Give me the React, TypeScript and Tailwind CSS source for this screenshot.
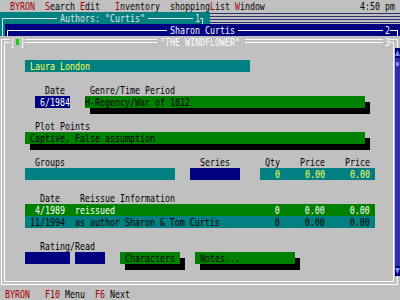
import type { ReactNode } from "react";

// text-mode cell is 5x12; glyphs stretched vertically like the DOS font
const Tx = ({ children, className = "" }: { children: ReactNode; className?: string }) => (
  <span className={`inline-block self-center leading-[8px] scale-y-120 ${className}`}>{children}</span>
);

const R = ({ children }: { children: ReactNode }) => (
  <span className="text-[#a80000]">{children}</span>
);

const Row = ({ children }: { children?: ReactNode }) => <div className="flex h-3">{children}</div>;

const MenuBar = () => (
  <div className="flex h-3 text-black">
    <Tx>
      {"  "}
      <R>BYRON</R>
      {"  "}
      <R>S</R>earch <R>E</R>dit{"   "}
      <R>I</R>nventory{"  "}shopping<R>L</R>ist <R>W</R>indow
    </Tx>
    <Tx className="ml-auto mr-[5px]">4:50 pm</Tx>
  </div>
);

const AuthorsBar = () => (
  <div className="flex h-3">
    <div className="flex w-[210px] bg-[#008080] text-[#e0e0e0]">
      <div className="ml-[2px] mt-[6px] w-[3px] border-l border-t border-[#e0e0e0]" />
      <div className="self-start mt-[6px] h-px w-[52px] bg-[#e0e0e0]" />
      <Tx className="ml-[3px]">Authors: "Curtis"</Tx>
      <div className="self-start mt-[6px] ml-[3px] h-px w-[45px] bg-[#e0e0e0]" />
      <Tx className="ml-[2px]">1</Tx>
      <div className="mt-[6px] w-[3px] border-t border-r border-[#e0e0e0]" />
    </div>
    <div className="flex-1 bg-[#c0c0c0] bg-[radial-gradient(circle,#283070_0.6px,transparent_0.9px)] bg-[length:2px_3px]" />
  </div>
);

const SharonBar = () => (
  <div className="flex h-3">
    <div className="w-[5px] bg-[#008080]">
      <div className="ml-[2px] h-full w-px bg-[#e0e0e0]" />
    </div>
    <div className="flex flex-1 bg-[#000080] text-white">
      <div className="ml-[2px] mt-[6px] w-[3px] border-l border-t border-white" />
      <div className="self-start mt-[6px] h-px w-[157px] bg-white" />
      <Tx className="ml-[3px]">Sharon Curtis</Tx>
      <div className="self-start mt-[6px] ml-[3px] h-px w-[145px] bg-white" />
      <Tx className="ml-[2px]">2</Tx>
      <div className="mt-[6px] w-[8px] border-t border-r border-white" />
    </div>
  </div>
);

const WindowTitle = () => (
  <div className="flex h-3 text-white">
    <div className="ml-px mt-[3px] flex w-[9px] border-l border-t border-white">
      <div className="ml-[2px] mt-[2px] flex-1 border-l border-t border-white" />
    </div>
    <Tx>[</Tx>
    <div className="w-[5px]">
      <div className="ml-[1px] mt-[3px] h-[6px] w-[3px] bg-[#10d010]" />
    </div>
    <Tx>]</Tx>
    <div className="self-start mt-[3px] h-[4px] w-[132px] border-y border-white" />
    <Tx className="ml-[3px]">"THE WINDFLOWER"</Tx>
    <div className="self-start mt-[3px] ml-[5px] h-[4px] w-[138px] border-y border-white" />
    <Tx className="ml-[2px]">3</Tx>
    <div className="mt-[3px] flex w-[8px] border-t border-r border-white">
      <div className="mt-[2px] w-[4px] border-t border-r border-white" />
    </div>
  </div>
);

const green = "bg-[#008000]";
const sh = "shadow-[5px_6px_0_#000]";

const Body = () => (
  <div className="flex w-[388px] flex-col text-black">
    <Row />
    <Row>
      <div className="ml-[20px] flex w-[225px] bg-[#008080] pl-[5px] text-[#ffff55]">
        <Tx>Laura London</Tx>
      </div>
    </Row>
    <Row />
    <Row>
      <Tx className="ml-[40px]">Date</Tx>
      <Tx className="ml-[25px]">Genre/Time Period</Tx>
    </Row>
    <Row>
      <div className="ml-[30px] flex w-[35px] bg-[#000080] pl-[5px] text-white">
        <Tx>6/1984</Tx>
      </div>
      <div className={`ml-[15px] flex w-[280px] ${green} ${sh}`}>
        <Tx>H-Regency/War of 1812</Tx>
      </div>
    </Row>
    <Row />
    <Row>
      <Tx className="ml-[30px]">Plot Points</Tx>
    </Row>
    <Row>
      <div className={`ml-[20px] flex w-[340px] pl-[5px] ${green} ${sh}`}>
        <Tx>Captive, False assumption</Tx>
      </div>
    </Row>
    <Row />
    <Row>
      <Tx className="ml-[30px] w-[165px]">Groups</Tx>
      <Tx className="w-[65px]">Series</Tx>
      <Tx className="w-[35px]">Qty</Tx>
      <Tx className="w-[45px]">Price</Tx>
      <Tx>Price</Tx>
    </Row>
    <Row>
      <div className="ml-[20px] w-[150px] bg-[#008080]" />
      <div className="ml-[15px] w-[50px] bg-[#000080]" />
      <div className="ml-[20px] flex w-[115px] bg-[#008080] text-[#ffff55]">
        <Tx>{"   0     0.00     0.00"}</Tx>
      </div>
    </Row>
    <Row />
    <Row>
      <Tx className="ml-[35px]">Date</Tx>
      <Tx className="ml-[20px]">Reissue Information</Tx>
    </Row>
    <Row>
      <div className={`ml-[20px] flex w-[350px] ${green} text-white`}>
        <Tx>{"  4/1989  reissued" + " ".repeat(32) + "0     0.00     0.00"}</Tx>
      </div>
    </Row>
    <Row>
      <div className="ml-[20px] flex w-[350px] bg-[#008080] text-black">
        <Tx>{" 11/1994  as author Sharon & Tom Curtis" + " ".repeat(11) + "0     0.00     0.00"}</Tx>
      </div>
    </Row>
    <Row />
    <Row>
      <Tx className="ml-[35px]">Rating/Read</Tx>
    </Row>
    <Row>
      <div className="ml-[20px] w-[45px] bg-[#000080]" />
      <div className="ml-[5px] w-[30px] bg-[#000080]" />
      <div className={`ml-[15px] flex w-[60px] pl-[5px] ${green} ${sh}`}>
        <Tx>Characters</Tx>
      </div>
      <div className={`ml-[15px] flex w-[100px] pl-[5px] ${green} ${sh}`}>
        <Tx>Notes...</Tx>
      </div>
    </Row>
    <Row />
  </div>
);

const ScrollBar = () => (
  <div className="ml-px flex w-[5px] flex-col bg-[#000080] bg-[radial-gradient(circle,#4848c8_0.6px,transparent_0.9px)] bg-[length:2px_2px]">
    <svg width="5" height="10" viewBox="0 0 5 10" className="bg-[#000080]">
      <path d="M2.5 2 L5 8 L0 8 Z" fill="#7890f0" />
    </svg>
    <div className="mt-[4px] ml-px h-[4px] w-[3px] bg-[#7890f0]" />
    <div className="flex-1" />
    <svg width="5" height="10" viewBox="0 0 5 10" className="bg-[#000080]">
      <path d="M0 2 L5 2 L2.5 8 Z" fill="#7890f0" />
    </svg>
  </div>
);

export default function App() {
  return (
    <div className="h-[300px] w-[400px] overflow-hidden whitespace-pre bg-[#c0c0c0] font-['DejaVu_Sans_Mono',monospace] text-[8.305px] leading-3">
      <MenuBar />
      <AuthorsBar />
      <SharonBar />
      <WindowTitle />
      <div className="flex h-[228px]">
        <div className="ml-px w-[4px] border-x border-white" />
        <Body />
        <div className="w-px bg-white" />
        <ScrollBar />
      </div>
      <div className="flex h-3">
        <div className="ml-px flex h-[9px] w-[397px] border-x border-b border-white">
          <div className="mb-[2px] ml-[2px] mr-[3px] flex-1 border-x border-b border-white" />
        </div>
      </div>
      <div className="flex h-3 text-black">
        <Tx>
          {" "}
          <R>BYRON</R>
          {"   "}
          <R>F10</R> Menu{"  "}
          <R>F6</R> Next
        </Tx>
      </div>
    </div>
  );
}
